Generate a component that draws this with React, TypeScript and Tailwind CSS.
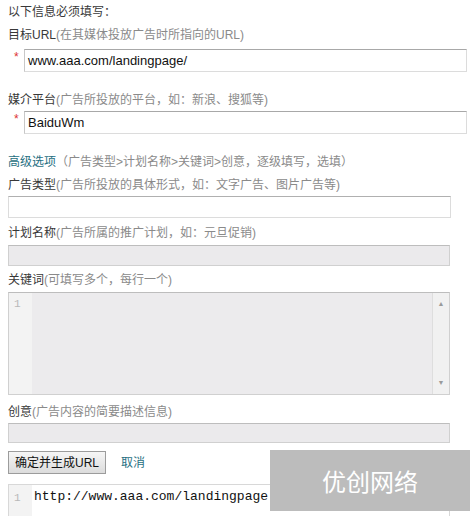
const cjk = { fontFamily: '"Liberation Sans", "Noto Sans CJK SC", sans-serif' };

function Label({ main, hint }: { main: string; hint: string }) {
  return (
    <div className="h-[18px] text-[12px] leading-[18px] whitespace-nowrap">
      <span className="text-[#383838]">{main}</span>
      <span className="text-[#8a8a8a]">{hint}</span>
    </div>
  );
}

function RequiredInput({ value }: { value: string }) {
  return (
    <div className="flex items-start">
      <span className="w-[16px] pl-[6px] pt-[1px] text-[12px] leading-[14px] text-[#d33]">*</span>
      <div className="flex h-[23px] w-[443px] items-center border border-[#dcdcdc] border-t-[#a8a8a8] border-l-[#c8c8c8] bg-white px-[3px] text-[13px] text-[#111]">
        {value}
      </div>
    </div>
  );
}

export default function App() {
  return (
    <div className="relative h-[516px] w-[475px] overflow-hidden bg-white px-2 pt-[3px]" style={cjk}>
      <div className="h-[18px] text-[12px] leading-[18px] text-[#383838]">以下信息必须填写：</div>

      <div className="mt-[5px]">
        <Label main="目标URL" hint="(在其媒体投放广告时所指向的URL)" />
      </div>
      <div className="mt-[5px]">
        <RequiredInput value="www.aaa.com/landingpage/" />
      </div>

      <div className="mt-[19px]">
        <Label main="媒介平台" hint="(广告所投放的平台，如：新浪、搜狐等)" />
      </div>
      <div className="mt-[2px]">
        <RequiredInput value="BaiduWm" />
      </div>

      <div className="mt-[19px] h-[18px] text-[12px] leading-[18px] whitespace-nowrap">
        <span className="text-[#1f6f82]">高级选项</span>
        <span className="text-[#8a8a8a]">（广告类型&gt;计划名称&gt;关键词&gt;创意，逐级填写，选填）</span>
      </div>

      <div className="mt-[5px]">
        <Label main="广告类型" hint="(广告所投放的具体形式，如：文字广告、图片广告等)" />
      </div>
      <div className="mt-[2px] h-[22px] w-[443px] border border-[#dcdcdc] border-t-[#b0b0b0] bg-white" />

      <div className="mt-[6px]">
        <Label main="计划名称" hint="(广告所属的推广计划，如：元旦促销)" />
      </div>
      <div className="mt-[3px] h-[21px] w-[442px] border border-[#d0d0d0] border-t-[#bdbdbd] bg-[#ebeaec]" />

      <div className="mt-[5px]">
        <Label main="关键词" hint="(可填写多个，每行一个)" />
      </div>
      <div className="mt-[3px] flex h-[103px] w-[442px] border border-[#d0d0d0] border-t-[#bdbdbd] bg-[#ecebed]">
        <div className="w-[23px] bg-[#f3f3f3] pl-[5px] pt-[4px] text-[11px] leading-[14px] text-[#b8b8b8]" style={{ fontFamily: '"Liberation Mono", monospace' }}>
          1
        </div>
        <div className="flex-1" />
        <div className="flex w-[17px] flex-col items-center justify-between border-l border-[#dedede] bg-[#f1f1f1] py-[7px] text-[7px] leading-[8px] text-[#9a9a9a]">
          <span>▲</span>
          <span>▼</span>
        </div>
      </div>

      <div className="mt-[8px]">
        <Label main="创意" hint="(广告内容的简要描述信息)" />
      </div>
      <div className="mt-[2px] h-[20px] w-[442px] border border-[#d0d0d0] border-t-[#bdbdbd] bg-[#ebeaec]" />

      <div className="mt-[8px] flex items-center">
        <div className="flex h-[23px] w-[98px] items-center justify-center border border-[#9c9c9c] bg-gradient-to-b from-[#f6f6f6] to-[#dcdcdc] text-[12px] text-[#111]">
          确定并生成URL
        </div>
        <span className="ml-[15px] text-[12px] text-[#1f6f82]">取消</span>
      </div>

      <div className="mt-[10px] flex h-[40px] w-[442px] border border-[#d8d8d8] bg-white">
        <div className="w-[23px] bg-[#f3f3f3] pl-[5px] pt-[6px] text-[11px] leading-[14px] text-[#b8b8b8]" style={{ fontFamily: '"Liberation Mono", monospace' }}>
          1
        </div>
        <div className="pl-[2px] pt-[4px] text-[13px] leading-[16px] text-[#111]" style={{ fontFamily: '"Liberation Mono", monospace' }}>
          http://www.aaa.com/landingpage
        </div>
      </div>

      <div className="absolute left-[270px] top-[450px] flex h-[61px] w-[200px] items-center justify-center bg-[#bcbcbc] text-[24px] text-white">
        <span style={{ fontFamily: '"Noto Sans CJK SC", sans-serif' }}>优创网络</span>
      </div>
    </div>
  );
}
